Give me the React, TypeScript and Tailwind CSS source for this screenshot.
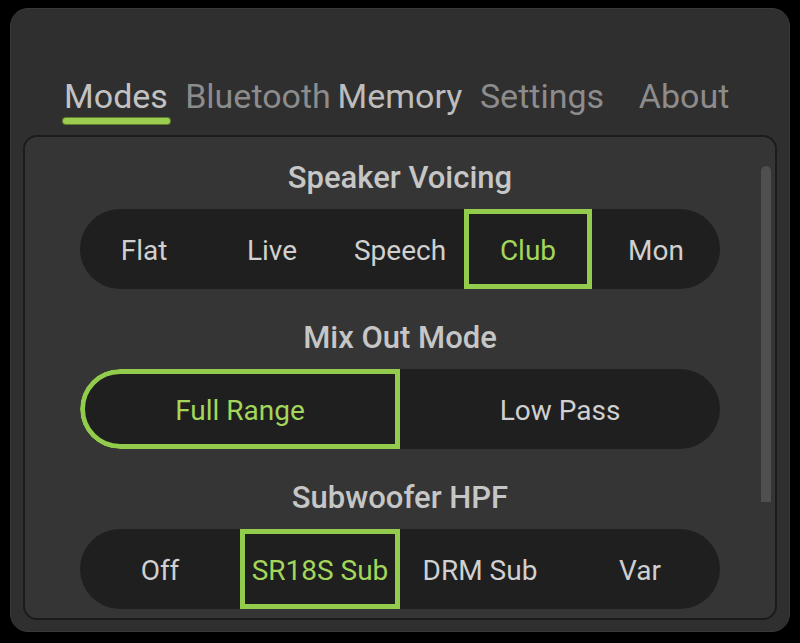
import type { ReactNode } from "react";

const tabs = [
	{ label: "Modes", tone: "text-[#c2c2c2]", active: true },
	{ label: "Bluetooth", tone: "text-[#8c8c8c]", active: false },
	{ label: "Memory", tone: "text-[#bdbdbd]", active: false },
	{ label: "Settings", tone: "text-[#8c8c8c]", active: false },
	{ label: "About", tone: "text-[#8c8c8c]", active: false },
];

function Section({ title, children }: { title: string; children: ReactNode }) {
	return (
		<div className="mb-[24px]">
			<div className="flex h-[48px] items-center justify-center pt-[1px] text-[31px] font-medium leading-none text-[#c6c6c6]">
				{title}
			</div>
			<div className="mx-auto mt-[8px] flex h-[80px] w-[640px] overflow-hidden rounded-full bg-[#1f1f1f]">
				{children}
			</div>
		</div>
	);
}

function Option({
	label,
	width,
	selected = false,
	className = "",
}: {
	label: string;
	width: string;
	selected?: boolean;
	className?: string;
}) {
	return (
		<div
			className={`flex shrink-0 items-center justify-center pt-[3px] text-[28px] ${width} ${
				selected
					? "border-[5px] border-[#93cc4c] text-[#a3d65a]"
					: "text-[#d0d0d0]"
			} ${className}`}
		>
			{label}
		</div>
	);
}

export default function App() {
	return (
		<div
			className="h-[643px] w-[800px] overflow-hidden bg-black pl-[10px] pt-[8px]"
			style={{ fontFamily: "Roboto, 'Liberation Sans', sans-serif" }}
		>
			<div className="h-[624px] w-[780px] overflow-hidden rounded-[18px] border border-[#383838] bg-[#2f2f2f] pt-[67px]">
				<div className="flex justify-center">
					{tabs.map((t) => (
						<div key={t.label} className="flex w-[142px] flex-col items-center">
							<span className={`text-[34px] leading-[40px] ${t.tone}`}>{t.label}</span>
							<div
								className={`mt-[2px] h-[6px] w-[107px] rounded-full ${
									t.active ? "bg-[#9ccc50] ring-1 ring-[#5f7f2f]" : ""
								}`}
							/>
						</div>
					))}
				</div>

				<div className="relative mx-[12px] mt-[11px] h-[485px] overflow-hidden rounded-[14px] border-2 border-[#1c1c1c] bg-[#353535] pt-[16px]">
					<div className="absolute right-[4px] top-[29px] h-[336px] w-[10px] rounded-t-full bg-[#4f4f4f]" />

					<Section title="Speaker Voicing">
						<Option label="Flat" width="w-[128px]" />
						<Option label="Live" width="w-[128px]" />
						<Option label="Speech" width="w-[128px]" />
						<Option label="Club" width="w-[128px]" selected />
						<Option label="Mon" width="w-[128px]" />
					</Section>

					<Section title="Mix Out Mode">
						<Option label="Full Range" width="w-[320px]" selected className="rounded-l-full" />
						<Option label="Low Pass" width="w-[320px]" />
					</Section>

					<Section title="Subwoofer HPF">
						<Option label="Off" width="w-[160px]" />
						<Option label="SR18S Sub" width="w-[160px]" selected />
						<Option label="DRM Sub" width="w-[160px]" />
						<Option label="Var" width="w-[160px]" />
					</Section>
				</div>
			</div>
		</div>
	);
}
